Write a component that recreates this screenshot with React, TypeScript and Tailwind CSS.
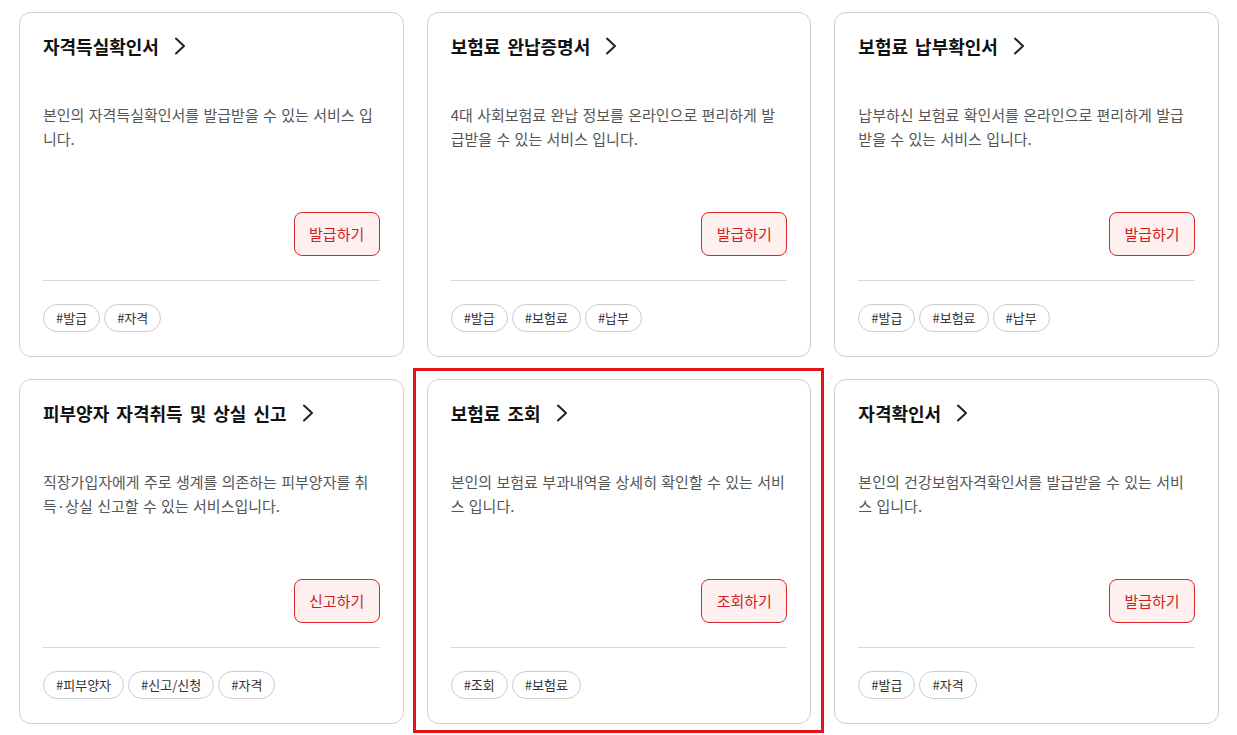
import React from "react";

type Card = {
  title: string;
  lines: string[];
  button: string;
  tags: string[];
  highlight?: boolean;
};

const cards: Card[] = [
  {
    title: "자격득실확인서",
    lines: ["본인의 자격득실확인서를 발급받을 수 있는 서비스 입", "니다."],
    button: "발급하기",
    tags: ["#발급", "#자격"],
  },
  {
    title: "보험료 완납증명서",
    lines: ["4대 사회보험료 완납 정보를 온라인으로 편리하게 발", "급받을 수 있는 서비스 입니다."],
    button: "발급하기",
    tags: ["#발급", "#보험료", "#납부"],
  },
  {
    title: "보험료 납부확인서",
    lines: ["납부하신 보험료 확인서를 온라인으로 편리하게 발급", "받을 수 있는 서비스 입니다."],
    button: "발급하기",
    tags: ["#발급", "#보험료", "#납부"],
  },
  {
    title: "피부양자 자격취득 및 상실 신고",
    lines: ["직장가입자에게 주로 생계를 의존하는 피부양자를 취", "득·상실 신고할 수 있는 서비스입니다."],
    button: "신고하기",
    tags: ["#피부양자", "#신고/신청", "#자격"],
  },
  {
    title: "보험료 조회",
    lines: ["본인의 보험료 부과내역을 상세히 확인할 수 있는 서비", "스 입니다."],
    button: "조회하기",
    tags: ["#조회", "#보험료"],
    highlight: true,
  },
  {
    title: "자격확인서",
    lines: ["본인의 건강보험자격확인서를 발급받을 수 있는 서비", "스 입니다."],
    button: "발급하기",
    tags: ["#발급", "#자격"],
  },
];

function Chevron() {
  return (
    <svg width="12" height="18" viewBox="0 0 12 18" className="ml-[15px] shrink-0">
      <polyline points="2,1.5 10,9 2,16.5" fill="none" stroke="#222" strokeWidth="2" strokeLinecap="round" strokeLinejoin="round" />
    </svg>
  );
}

function ServiceCard({ card }: { card: Card }) {
  return (
    <div className="relative">
      {card.highlight && (
        <div className="pointer-events-none absolute left-[-14px] right-[-13px] top-[-11px] bottom-[-9px] border-[3px] border-[#e4141b]" />
      )}
      <div className="flex h-[345px] flex-col rounded-[12px] border border-[#cfcfcf] bg-white px-[23px] pt-[19px] pb-[24px]">
        <div className="flex items-center">
          <span className="text-[18px] font-bold leading-[28px] [word-spacing:3px] text-[#111]">{card.title}</span>
          <Chevron />
        </div>
        <p className="mt-[43px] text-[15px] leading-[24px] [word-spacing:1px] text-[#555] whitespace-nowrap">
          {card.lines[0]}
          <br />
          {card.lines[1]}
        </p>
        <div className="mt-auto flex justify-end">
          <button className="h-[44px] w-[86px] rounded-[8px] border border-[#d9252b] bg-[#fff0f0] text-[15px] text-[#d01c22]">
            {card.button}
          </button>
        </div>
        <div className="mt-[24px] h-px bg-[#d9d9d9]" />
        <div className="mt-[23px] flex gap-[4px]">
          {card.tags.map((t) => (
            <span
              key={t}
              className="flex h-[28px] items-center rounded-full border border-[#cccccc] px-[12px] text-[13px] text-[#333]"
            >
              {t}
            </span>
          ))}
        </div>
      </div>
    </div>
  );
}

export default function App() {
  return (
    <div
      className="min-h-[735px] w-[1237px] bg-white pl-[19px] pt-[12px]"
      style={{ fontFamily: '"Noto Sans CJK KR", "Noto Sans", sans-serif' }}
    >
      <div className="grid w-[1200px] grid-cols-3 gap-x-[23px] gap-y-[22px]">
        {cards.map((c) => (
          <ServiceCard key={c.title} card={c} />
        ))}
      </div>
    </div>
  );
}
